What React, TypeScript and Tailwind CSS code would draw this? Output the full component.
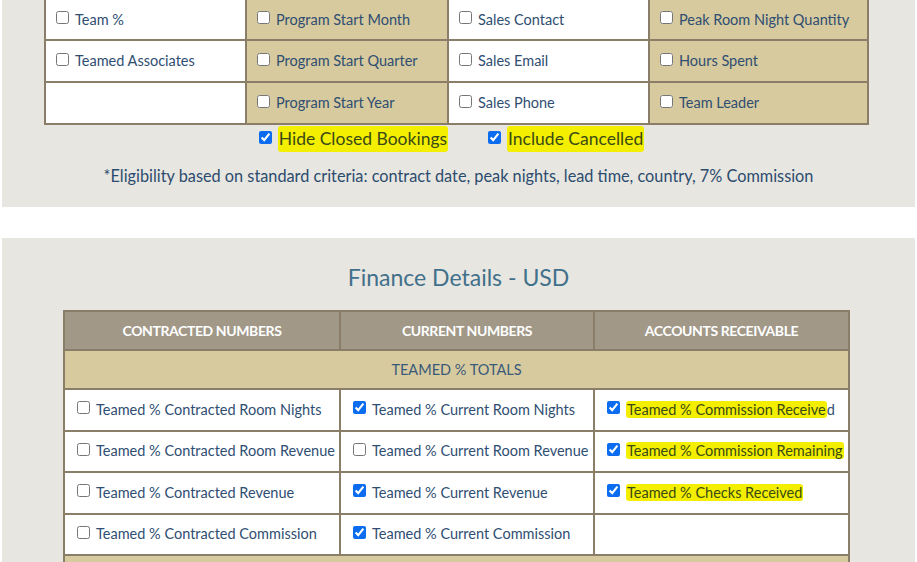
import React from "react";

const font = { fontFamily: "Lato, 'Open Sans', sans-serif" };

type Cell = { label?: string; checked?: boolean; marked?: boolean; partial?: string };

function Box({ checked }: { checked?: boolean }) {
  return (
    <input
      type="checkbox"
      defaultChecked={checked}
      className="m-0 mr-[6px] h-[13px] w-[13px] shrink-0 translate-y-[-2px] accent-[#0b6cf0]"
    />
  );
}

function Marker({ children }: { children: React.ReactNode }) {
  return (
    <span className="rounded-[3px] bg-[#f4ef00] px-[1px] text-[#3a4a14] [box-decoration-break:clone]">
      {children}
    </span>
  );
}

const topRows: Cell[][] = [
  [{ label: "Team %" }, { label: "Program Start Month" }, { label: "Sales Contact" }, { label: "Peak Room Night Quantity" }],
  [{ label: "Teamed Associates" }, { label: "Program Start Quarter" }, { label: "Sales Email" }, { label: "Hours Spent" }],
  [{}, { label: "Program Start Year" }, { label: "Sales Phone" }, { label: "Team Leader" }],
];

const financeRows: Cell[][] = [
  [
    { label: "Teamed % Contracted Room Nights" },
    { label: "Teamed % Current Room Nights", checked: true },
    { label: "Teamed % Commission Receive", partial: "d", checked: true, marked: true },
  ],
  [
    { label: "Teamed % Contracted Room Revenue" },
    { label: "Teamed % Current Room Revenue" },
    { label: "Teamed % Commission Remaining", checked: true, marked: true },
  ],
  [
    { label: "Teamed % Contracted Revenue" },
    { label: "Teamed % Current Revenue", checked: true },
    { label: "Teamed % Checks Received", checked: true, marked: true },
  ],
  [{ label: "Teamed % Contracted Commission" }, { label: "Teamed % Current Commission", checked: true }, {}],
];

function CellContent({ c }: { c: Cell }) {
  if (!c.label) return null;
  return (
    <div className="flex items-center whitespace-nowrap">
      <Box checked={c.checked} />
      <span>
        {c.marked ? <Marker>{c.label}</Marker> : c.label}
        {c.partial}
      </span>
    </div>
  );
}

export default function App() {
  const widthsTop = ["w-[201px]", "w-[202px]", "w-[201px]", "w-[219px]"];
  const widthsFin = ["w-[276px]", "w-[254px]", "w-[255px]"];
  return (
    <div className="h-[562px] w-[917px] overflow-hidden bg-white" style={font}>
      {/* upper panel */}
      <div className="ml-[2px] h-[207px] w-[913px] bg-[#e8e6e1]">
        <table className="ml-[42px] w-[823px] table-fixed border-collapse border-2 border-t-0 border-[#8b7e68] text-[14.5px] text-[#2f4e72]">
          <tbody>
            {topRows.map((row, i) => (
              <tr key={i} className={i === 0 ? "h-[40px]" : "h-[42px]"}>
                {row.map((c, j) => (
                  <td
                    key={j}
                    className={`${widthsTop[j]} border-2 border-[#8b7e68] px-[10px] ${i === 0 ? "border-t-0" : ""} ${
                      j % 2 === 1 ? "bg-[#d6ca9e]" : "bg-white"
                    }`}
                  >
                    <CellContent c={c} />
                  </td>
                ))}
              </tr>
            ))}
          </tbody>
        </table>
        <div className="mt-[1px] flex justify-center gap-[40px] pr-[14px] text-[17.5px] leading-[26px] text-[#6b3a12]">
          <label className="flex items-center">
            <Box checked />
            <Marker>Hide Closed Bookings</Marker>
          </label>
          <label className="flex items-center">
            <Box checked />
            <Marker>Include Cancelled</Marker>
          </label>
        </div>
        <p className="mt-[12px] text-center text-[16.3px] leading-[24px] text-[#2c4c6e]">
          *Eligibility based on standard criteria: contract date, peak nights, lead time, country, 7% Commission
        </p>
      </div>

      {/* finance panel */}
      <div className="ml-[2px] mt-[31px] h-[330px] w-[913px] bg-[#e8e6e1] pt-[23px]">
        <h2 className="text-center text-[23px] leading-[32px] text-[#41708a]">Finance Details - USD</h2>
        <table className="ml-[61px] mt-[17px] w-[785px] table-fixed border-collapse border-2 border-[#8b7e68] text-[14.5px] text-[#2f4e72]">
          <thead>
            <tr className="h-[39px] bg-[#a19888] text-[14px] font-bold uppercase text-white">
              {["Contracted Numbers", "Current Numbers", "Accounts Receivable"].map((h, j) => (
                <th key={h} className={`${widthsFin[j]} border-2 border-[#8b7e68] font-bold tracking-[-0.4px]`}>
                  {h}
                </th>
              ))}
            </tr>
          </thead>
          <tbody>
            <tr className="h-[39px] bg-[#d6ca9e]">
              <td colSpan={3} className="border-2 border-[#8b7e68] text-center text-[#3a5a7a]">
                TEAMED % TOTALS
              </td>
            </tr>
            {financeRows.map((row, i) => (
              <tr key={i} className="h-[41.5px] bg-white">
                {row.map((c, j) => (
                  <td key={j} className="border-2 border-[#8b7e68] px-[12px]">
                    <CellContent c={c} />
                  </td>
                ))}
              </tr>
            ))}
            <tr className="h-[30px] bg-[#d6ca9e]">
              <td colSpan={3} className="border-2 border-[#8b7e68]" />
            </tr>
          </tbody>
        </table>
      </div>
    </div>
  );
}
